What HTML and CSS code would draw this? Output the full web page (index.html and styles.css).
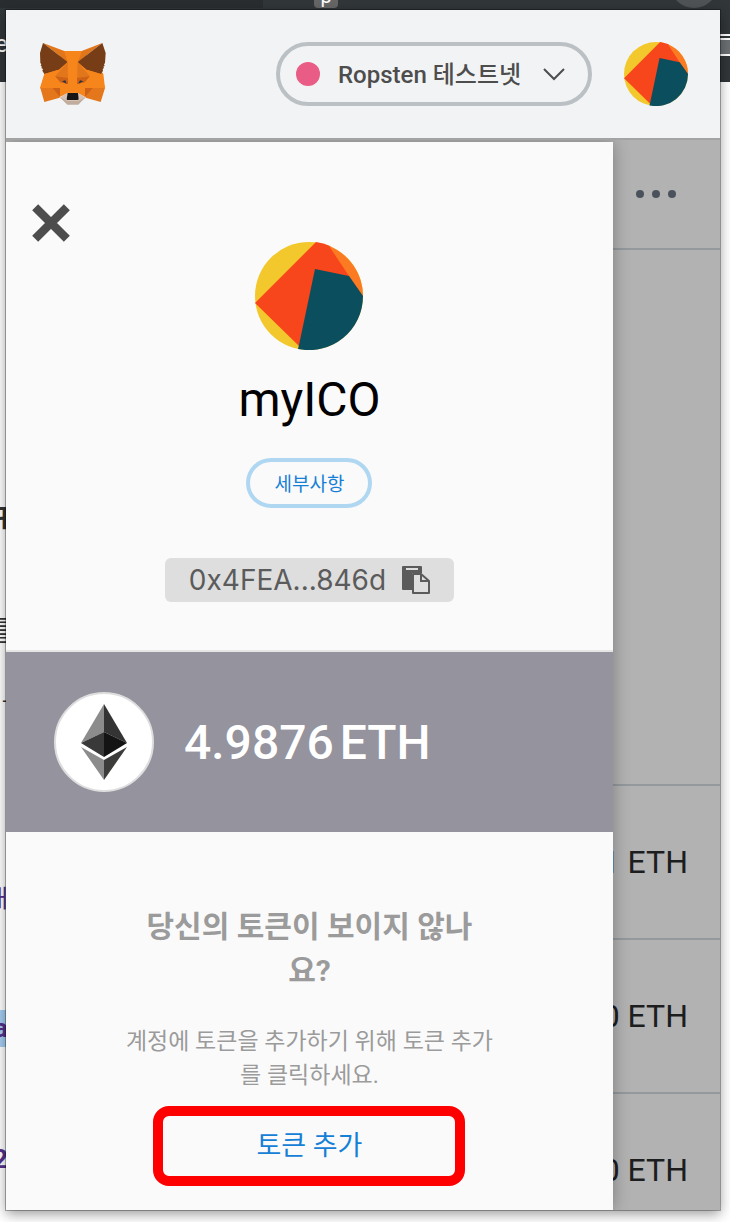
FILE: index.html
```
<!DOCTYPE html>
<html lang="ko">
  <head>
    <meta charset="UTF-8" />
    <meta name="viewport" content="width=device-width, initial-scale=1.0" />
    <link rel="stylesheet" href="styles.css">
    <title>MetaMask</title>
  </head>
  <body>
    <!-- page behind the popup -->
    <div class="backdrop">
      <div class="browser-bar">
        <div class="browser-tabs"></div>
        <span class="tab-badge">p</span>
        <span class="tab-avatar"></span>
        <span class="bar-text">e</span>
        <span class="bar-window"></span>
      </div>
      <span class="peek peek-heading">ㅋ</span>
      <span class="peek peek-text">를</span>
      <span class="peek peek-dash">-</span>
      <span class="peek peek-link">대</span>
      <span class="peek peek-mark">a</span>
      <span class="peek peek-number">2</span>
    </div>

    <div class="popup">
      <header class="header">
        <svg class="fox" viewBox="114 126 216 192" role="img" aria-label="MetaMask">
          <path fill="#f6851b" d="M190 153h56l64 68 5 43-60 26-18-12h-38l-20 12-59-26 14-44z"/>
          <path fill="#e2761b" d="M129 129l64 24 10 33zM307 129l-62 24-12 33z"/>
          <path fill="#763d16" d="M129 129l74 57-27 23-43 13-6-10 2-5-5-3 2-4-4-3 2-4-3-4-1-30zM307 129l-74 57 27 23 43 13 6-10-1-5 4-3-2-4 4-3-2-4 3-4 2-30z"/>
          <path fill="#f6851b" d="M193 153h53l-13 33-2 92h-26l-2-92z"/>
          <path fill="#e2761b" d="M203 186l1 59-39-16zM233 186l-2 59 39-16z"/>
          <path fill="#cd6116" d="M165 229l39 5v19l-24-6zM270 229l-39 5v19l24-6z"/>
          <path fill="#f6851b" d="M133 222l43-13-11 20 16 19 23 5v27l-24-16h-59zM303 222l-43-13 10 20-16 19-23 5v27l24-16h60z"/>
          <path fill="#e4761b" d="M121 264h59l-1 29-46 13zM315 264h-60l2 29 45 13z"/>
          <path fill="#cd6116" d="M158 264h22v27zM278 264h-23v27z"/>
          <path fill="#f6851b" d="M181 250l20 4 2 25-22 11zM254 250l-20 4-1 25 22 11z"/>
          <path fill="#d7c1b3" d="M179 293l23-14h32l23 14-21 16h-35z"/>
          <path fill="#c0ad9e" d="M181 293l22 10h31l21-10-20 21h-33z"/>
          <path fill="#161616" d="M203 279h31l2 19-3 2h-31l-2-2z"/>
          <path fill="#233447" d="M186 244l10-3 4 10zM250 244l-10-3-5 10z"/>
        </svg>
        <button class="network" type="button">
          <span class="network-dot"></span>
          <span class="network-name">Ropsten 테스트넷</span>
          <svg class="chevron" viewBox="0 0 24 14" aria-hidden="true"><path d="M2 2l10 10L22 2"/></svg>
        </button>
        <button class="account-button" type="button" aria-label="myICO">
          <svg class="identicon" viewBox="0 0 108 108" aria-hidden="true">
            <circle cx="54" cy="54" r="54" fill="#f3c82c"/>
            <path fill="#f7451c" d="M0 61L61 0a54 54 0 0 1 14 4l33 50-63 51z"/>
            <path fill="#fb7a22" d="M74 4a54 54 0 0 1 34 50L94 34z"/>
            <path fill="#0b4f5e" d="M60 27l34 7 14 20a54 54 0 0 1-65 53l1-4z"/>
          </svg>
        </button>
      </header>

      <div class="content">
        <main class="wallet">
          <div class="wallet-menu">
            <button class="dots" type="button" aria-label="메뉴"><i></i><i></i><i></i></button>
          </div>
          <div class="wallet-summary"></div>
          <div class="transaction">1 ETH</div>
          <div class="transaction">0 ETH</div>
          <div class="transaction">0 ETH</div>
        </main>

        <aside class="sidebar">
          <button class="close" type="button" aria-label="닫기">
            <svg viewBox="0 0 36 36" aria-hidden="true"><path d="M3 3l30 30M33 3L3 33"/></svg>
          </button>
          <section class="account">
            <svg class="identicon identicon-large" viewBox="0 0 108 108" aria-hidden="true">
              <circle cx="54" cy="54" r="54" fill="#f3c82c"/>
              <path fill="#f7451c" d="M0 61L61 0a54 54 0 0 1 14 4l33 50-63 51z"/>
              <path fill="#fb7a22" d="M74 4a54 54 0 0 1 34 50L94 34z"/>
              <path fill="#0b4f5e" d="M60 27l34 7 14 20a54 54 0 0 1-65 53l1-4z"/>
            </svg>
            <h1 class="account-name">myICO</h1>
            <button class="details" type="button">세부사항</button>
            <button class="address" type="button">
              0x4FEA...846d
              <svg class="copy" viewBox="0 0 28 28" aria-hidden="true">
                <path fill="#5b5b5b" d="M1 0h18a1 1 0 0 1 1 1v6H11a1 1 0 0 0-1 1v16H1a1 1 0 0 1-1-1V1a1 1 0 0 1 1-1z"/>
                <path fill="#dedede" d="M4 2h12v2H4z"/>
                <path fill="#dedede" stroke="#5b5b5b" stroke-width="2" stroke-linejoin="round" d="M11 8h8l8 7v12H11z"/>
                <path fill="none" stroke="#5b5b5b" stroke-width="2" d="M19 8v7h8"/>
              </svg>
            </button>
          </section>
          <section class="balance">
            <svg class="ether" viewBox="0 0 100 100" role="img" aria-label="ETH">
              <circle cx="50" cy="50" r="49" fill="#fff" stroke="#dedede" stroke-width="2"/>
              <path fill="#8c8c8c" d="M50 12v28L27 51zM50 68v20L27 55z"/>
              <path fill="#343434" d="M50 12v28l23 11z"/>
              <path fill="#393939" d="M50 40v25L27 51z"/>
              <path fill="#141414" d="M50 40v25l23-14z"/>
              <path fill="#3c3c3b" d="M50 68v20l23-33z"/>
            </svg>
            <div class="balance-amount">
              <span>4.9876</span>
              <span>ETH</span>
            </div>
          </section>
          <section class="tokens">
            <h2 class="tokens-title">당신의 토큰이 보이지 않나요?</h2>
            <p class="tokens-text">계정에 토큰을 추가하기 위해 토큰 추가를 클릭하세요.</p>
            <button class="add-token" type="button">토큰 추가</button>
          </section>
        </aside>
      </div>
    </div>
  </body>
</html>
```
FILE: styles.css
```
* {
  box-sizing: border-box;
}

body {
  margin: 0;
  padding: 10px 10px 12px 6px;
  background: #fff;
  font-family: Roboto, "Noto Sans CJK KR", sans-serif;
  color: #4d4d4d;
}

button {
  margin: 0;
  padding: 0;
  border: 0;
  background: none;
  font-family: inherit;
  color: inherit;
  cursor: pointer;
}

svg {
  display: block;
}

/* page behind the popup */
.backdrop {
  position: absolute;
  inset: 0;
  overflow: hidden;
}

.browser-bar {
  position: relative;
  height: 82px;
  background: #313639;
}

.browser-tabs {
  width: 36%;
  height: 8px;
  background: #292d30;
}

.tab-badge {
  position: absolute;
  top: -16px;
  left: 314px;
  width: 24px;
  height: 24px;
  border-radius: 4px;
  background: #666;
  color: #fff;
  font-size: 20px;
  line-height: 24px;
  text-align: center;
}

.tab-avatar {
  position: absolute;
  top: -40px;
  right: 12px;
  width: 48px;
  height: 48px;
  border-radius: 50%;
  background: #505356;
}

.bar-text {
  position: absolute;
  top: 30px;
  left: -5px;
  color: #fff;
  font-size: 24px;
  line-height: 28px;
}

.bar-window {
  position: absolute;
  top: 34px;
  right: 0;
  width: 12px;
  height: 22px;
  border-top: 2px solid #fff;
  border-bottom: 2px solid #fff;
  background: linear-gradient(#313639 2px, #fff 2px, #fff 4px, #6c7073 4px);
}

.peek {
  position: absolute;
  left: 0;
  width: 8px;
  display: flex;
  justify-content: flex-end;
  color: #333;
}

.peek-heading {
  top: 490px;
  width: 14px;
  font-size: 44px;
  line-height: 60px;
}

.peek-text {
  top: 612px;
  width: 14px;
  font-size: 28px;
  line-height: 40px;
}

.peek-dash {
  top: 690px;
  font-size: 20px;
  line-height: 20px;
}

.peek-link {
  top: 884px;
  color: #54308c;
  font-size: 24px;
  line-height: 30px;
}

.peek-mark {
  top: 1010px;
  height: 37px;
  background: #a5cdf2;
  color: #54308c;
  font-size: 26px;
  font-weight: 700;
  line-height: 37px;
}

.peek-number {
  top: 1142px;
  color: #54308c;
  font-size: 26px;
  font-weight: 700;
  line-height: 34px;
}

/* popup */
.popup {
  position: relative;
  min-height: 1200px;
  background: #b2b2b2;
  box-shadow: 0 0 0 1px rgba(0, 0, 0, 0.3), 0 4px 12px rgba(0, 0, 0, 0.4);
}

.header {
  display: flex;
  align-items: center;
  gap: 32px;
  padding: 32px;
  background: #f2f3f4;
}

.fox {
  width: 72px;
  height: 64px;
  margin-right: auto;
}

.network {
  display: flex;
  align-items: center;
  width: 316px;
  height: 64px;
  padding: 0 22px 0 16px;
  border: 4px solid #bbc0c5;
  border-radius: 32px;
  font-size: 24px;
  font-weight: 500;
}

.network-dot {
  width: 24px;
  height: 24px;
  margin-right: 18px;
  border-radius: 50%;
  background: #e95c85;
}

.network-name {
  padding-bottom: 4px;
}

.chevron {
  width: 24px;
  height: 14px;
  margin-left: auto;
  fill: none;
  stroke: #4d4d4d;
  stroke-width: 2;
}

.identicon {
  width: 64px;
  height: 64px;
}

.identicon-large {
  width: 108px;
  height: 108px;
}

/* the sidebar shares one grid cell with the wallet and covers it */
.content {
  display: grid;
  overflow: hidden;
  border-top: 2px solid #a3a3a3;
}

.wallet,
.sidebar {
  grid-area: 1 / 1;
}

.wallet-menu {
  display: flex;
  justify-content: flex-end;
  align-items: center;
  height: 110px;
  padding-right: 44px;
  border-bottom: 2px solid #93999d;
}

.dots {
  display: flex;
  gap: 8px;
}

.dots i {
  width: 8px;
  height: 8px;
  border-radius: 50%;
  background: #4a525b;
}

.wallet-summary {
  height: 534px;
}

.transaction {
  height: 154px;
  padding-right: 32px;
  border-top: 2px solid #93999d;
  color: #1c1d1f;
  font-size: 32px;
  line-height: 152px;
  text-align: right;
}

.transaction:last-child {
  height: 118px;
}

.sidebar {
  width: 85%;
  margin-top: 2px;
  background: #fafafa;
  box-shadow: 0 0 16px rgba(0, 0, 0, 0.3);
}

.close {
  display: block;
  margin: 62px 0 0 26px;
}

.close svg {
  width: 38px;
  height: 38px;
  fill: none;
  stroke: #4d4d4d;
  stroke-width: 8;
}

.account {
  display: flex;
  flex-direction: column;
  align-items: center;
  padding-bottom: 48px;
  border-bottom: 2px solid #e5e5e5;
}

.account-name {
  margin: 20px 0 28px;
  color: #000;
  font-size: 48px;
  font-weight: 400;
  line-height: 60px;
}

.details {
  width: 126px;
  height: 50px;
  padding-bottom: 2px;
  border: 4px solid #b0d7f2;
  border-radius: 25px;
  color: #1680d6;
  font-size: 19px;
}

.address {
  display: flex;
  align-items: center;
  gap: 16px;
  height: 44px;
  margin-top: 50px;
  padding: 0 24px;
  border-radius: 6px;
  background: #dedede;
  color: #5b5b5b;
  font-family: Inter, Roboto, sans-serif;
  font-size: 28px;
}

.copy {
  width: 28px;
  height: 28px;
}

.balance {
  display: flex;
  align-items: center;
  gap: 30px;
  padding: 40px 48px;
  background: #94939e;
  color: #fff;
  font-size: 48px;
  font-weight: 500;
}

.balance-amount {
  display: flex;
  gap: 6px;
}

.ether {
  width: 100px;
  height: 100px;
}

.tokens {
  display: flex;
  flex-direction: column;
  align-items: center;
  padding: 73px 24px 24px;
  color: #9b9b9b;
  text-align: center;
}

.tokens-title {
  max-width: 350px;
  margin: 0 0 32px;
  font-size: 30px;
  font-weight: 700;
  line-height: 44px;
}

.tokens-text {
  max-width: 376px;
  margin: 0 0 13px;
  font-size: 23px;
  line-height: 34px;
}

.add-token {
  width: 312px;
  height: 80px;
  padding-bottom: 6px;
  border: 10px solid #f00;
  border-radius: 16px;
  color: #1680d6;
  font-size: 27px;
}
```
